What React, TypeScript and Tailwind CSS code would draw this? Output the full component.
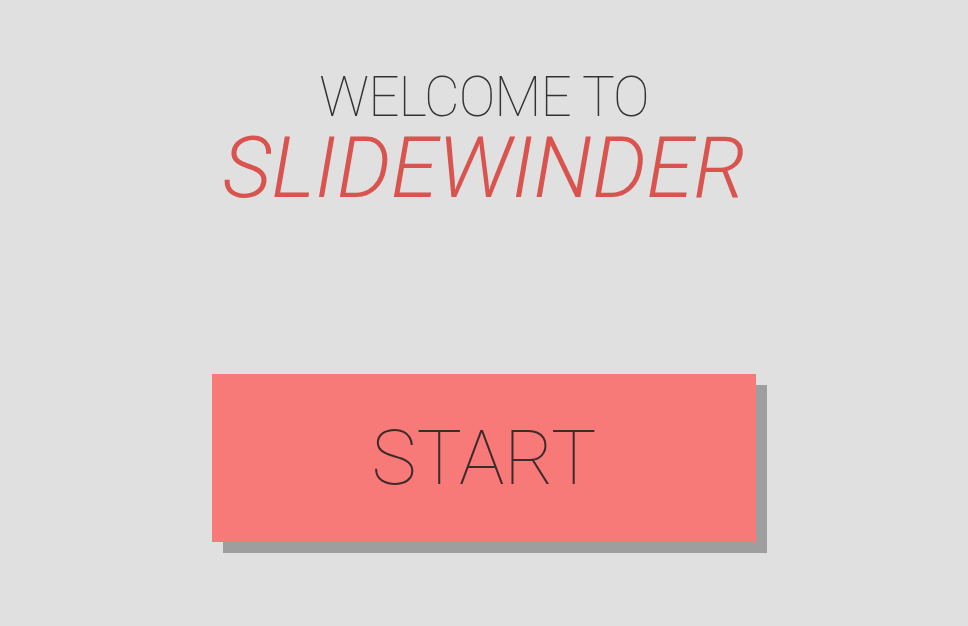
export default function App() {
    return (
        <div className="w-[968px] h-[626px] bg-[#e0e0e0] flex flex-col items-center overflow-hidden" style={{ fontFamily: "Roboto, 'Liberation Sans', sans-serif" }}>
            {/* Title */}
            <div className="mt-[69px] flex flex-col items-center">
                <h2 className="text-[55px] leading-[56px] font-thin text-[#333333] tracking-[-1px]">
                    WELCOME TO
                </h2>
                <h1 className="text-[85px] leading-[85px] font-light italic text-[#d9534f] mt-[1px]">
                    SLIDEWINDER
                </h1>
            </div>

            {/* Button */}
            <button className="mt-[163px] w-[544px] h-[168px] bg-[#f87a78] shadow-[11px_11px_0_#9e9e9e] flex items-center justify-center">
                <span className="text-[76px] leading-[76px] font-thin text-[#3d2b2b]">START</span>
            </button>
        </div>
    );
}
